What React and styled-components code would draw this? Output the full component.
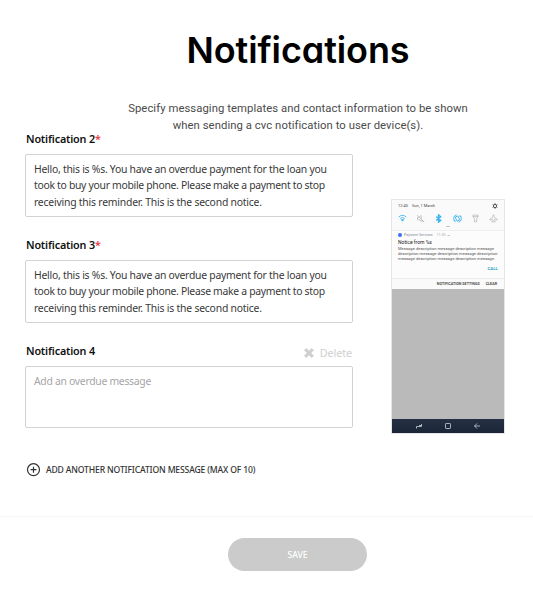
import React from "react";
import styled, { createGlobalStyle } from "styled-components";

const GlobalStyle = createGlobalStyle`
  *, *::before, *::after { box-sizing: border-box; }
  body { margin: 0; background: #fff; overflow: hidden; }
`;

const Page = styled.div`
  width: 533px;
  height: 596px;
  display: flex;
  flex-direction: column;
  overflow: hidden;
  background: #fff;
  font-family: "Noto Sans", sans-serif;
`;

const Header = styled.header`
  height: 133px;
  padding: 28px 0 0 63px;
  display: flex;
  flex-direction: column;
  align-items: center;
`;

const Title = styled.h1`
  margin: 0;
  font: 600 36px/44px Inter, sans-serif;
  font-feature-settings: "cv11";
  letter-spacing: -0.1px;
  color: #000;
`;

const Subtitle = styled.p`
  margin: 29px 0 0;
  font: 400 11.3px/16.5px Roboto, sans-serif;
  text-align: center;
  color: #4a4a4a;
`;

const Line = styled.span`
  display: block;
  white-space: nowrap;
  letter-spacing: ${(p) => p.$track || 0}px;
`;

const Content = styled.main`
  height: 383px;
  padding-left: 25px;
  display: flex;
  gap: 38px;
`;

const Form = styled.div`
  width: 328px;
`;

const Field = styled.section`
  height: 106px;
`;

const FieldHead = styled.div`
  height: 21px;
  padding: 0 1px;
  display: flex;
  justify-content: space-between;
`;

const Label = styled.label`
  margin-top: -2px;
  font-size: 10.8px;
  line-height: 16px;
  font-weight: 600;
  letter-spacing: -0.18px;
  color: #111;
`;

const Required = styled.span`
  color: #f0383c;
`;

const DeleteButton = styled.button`
  height: 16px;
  border: 0;
  padding: 0;
  background: none;
  display: flex;
  align-items: center;
  gap: 6px;
  font: 400 10.8px/16px "Noto Sans", sans-serif;
  letter-spacing: -0.1px;
  color: #cfcfcf;
`;

const MessageBox = styled.div`
  height: ${(p) => (p.$placeholder ? 62 : 63)}px;
  padding: 6px 8px;
  border: 1px solid #d2d2d2;
  border-radius: 2px;
  font-size: 10.4px;
  line-height: 16.4px;
  color: ${(p) => (p.$placeholder ? "#a6a6a6" : "#383838")};
`;

const AddButton = styled.button`
  margin-top: 11px;
  height: 16px;
  border: 0;
  padding: 0 0 0 1px;
  background: none;
  display: flex;
  align-items: center;
  gap: 5px;
  font: 500 8.6px/16px "Noto Sans", sans-serif;
  letter-spacing: -0.155px;
  white-space: nowrap;
  color: #333;
`;

const Phone = styled.aside`
  width: 114px;
  height: 235px;
  margin-top: 66px;
  border: 1px solid #e6e6e6;
  display: flex;
  flex-direction: column;
  background: #bababa;
  font-family: Roboto, sans-serif;
`;

const QuickPanel = styled.div`
  height: 31px;
  padding: 3px 6px 0;
  background: #fafafa;
  border-bottom: 1px solid #f0f0f0;
`;

const StatusRow = styled.div`
  height: 6px;
  display: flex;
  align-items: center;
  justify-content: space-between;
  font-size: 4px;
  line-height: 6px;
  color: #444;
`;

const Clock = styled.div`
  display: flex;
  gap: 4px;
  white-space: nowrap;
`;

const Toggles = styled.div`
  height: 12px;
  margin-top: 3px;
  display: flex;
  align-items: center;
  justify-content: space-between;
`;

const Handle = styled.div`
  width: 4px;
  height: 1px;
  margin: 2px auto 0;
  background: #c4c4c4;
`;

const Notice = styled.div`
  height: 48px;
  padding: 1px 6px 0;
  background: #fcfcfc;
  border-bottom: 1px solid #ececec;
`;

const NoticeSource = styled.div`
  height: 6px;
  display: flex;
  align-items: center;
  gap: 2px;
  font-size: 3.6px;
  line-height: 6px;
  color: #7e8c98;
  white-space: nowrap;
`;

const Dot = styled.span`
  width: 4px;
  height: 4px;
  border-radius: 50%;
  background: #3d6df2;
`;

const Time = styled.span`
  margin-left: 2px;
  color: #aaa;
`;

const NoticeTitle = styled.div`
  font-size: 5px;
  line-height: 8px;
  font-weight: 400;
  color: #222;
`;

const NoticeBody = styled.div`
  margin-top: 1px;
  font-size: 4.15px;
  line-height: 4.8px;
  color: #555;
`;

const Call = styled.div`
  margin-top: 5px;
  font-size: 4.4px;
  line-height: 6px;
  font-weight: 600;
  text-align: right;
  color: #1f9cc5;
`;

const NoticeActions = styled.div`
  height: 10px;
  padding: 0 7px;
  background: #fafafa;
  display: flex;
  align-items: center;
  justify-content: flex-end;
  gap: 6px;
  font-size: 3.7px;
  font-weight: 600;
  color: #444;
  white-space: nowrap;
`;

const Wallpaper = styled.div`
  flex: 1;
  background: #bababa;
`;

const NavBar = styled.div`
  height: 14px;
  padding: 0 23px;
  display: flex;
  align-items: center;
  justify-content: space-between;
  background: linear-gradient(#253044, #1b2537);
`;

const Icon = styled.svg`
  flex: none;
  width: ${(p) => p.$size}px;
  height: ${(p) => p.$size}px;
  fill: none;
  stroke: currentColor;
  stroke-width: ${(p) => p.$weight || 2};
  color: ${(p) => p.$color || "inherit"};
`;

const Footer = styled.footer`
  flex: 1;
  padding: 21px 0 0 62px;
  border-top: 1px solid #f5f5f5;
  display: flex;
  justify-content: center;
  align-items: flex-start;
`;

const SaveButton = styled.button`
  width: 139px;
  height: 33px;
  padding: 1px 0 0;
  border: 0;
  border-radius: 17px;
  background: #cbcbcb;
  color: #fff;
  font: 500 8.6px/32px "Noto Sans", sans-serif;
`;

const overdueMessage = [
  ["Hello, this is %s. You have an overdue payment for the loan you", -0.254],
  ["took to buy your mobile phone. Please make a payment to stop", -0.3],
  ["receiving this reminder. This is the second notice.", -0.212],
];

const fields = [
  { label: "Notification 2", required: true, lines: overdueMessage },
  { label: "Notification 3", required: true, lines: overdueMessage },
  { label: "Notification 4", removable: true, placeholder: true, lines: [["Add an overdue message", -0.29]] },
];

function NotificationField({ label, required, removable, placeholder, lines }) {
  return (
    <Field>
      <FieldHead>
        <Label>
          {label}
          {required && <Required>*</Required>}
        </Label>
        {removable && (
          <DeleteButton>
            <Icon $size={10} $weight={3.2} viewBox="0 0 10 10">
              <path d="M1.2 1.2 8.8 8.8M8.8 1.2 1.2 8.8" />
            </Icon>
            Delete
          </DeleteButton>
        )}
      </FieldHead>
      <MessageBox $placeholder={placeholder}>
        {lines.map(([text, track]) => (
          <Line key={text} $track={track}>{text}</Line>
        ))}
      </MessageBox>
    </Field>
  );
}

const toggles = [
  { name: "wifi", on: true, art: <><path d="M2 8a15 15 0 0 1 20 0M6 12a9 9 0 0 1 12 0" /><path d="M9 15h6l-3 4z" fill="currentColor" /></> },
  { name: "mute", art: <><path d="M4 9h4l6-5v16l-6-5H4zM3 3l18 18M18 16v4h4" /></> },
  { name: "bluetooth", on: true, art: <path d="m6 7 12 10-6 5V2l6 5L6 17" strokeWidth="3.5" /> },
  { name: "rotate", on: true, art: <><rect x="8" y="6" width="8" height="12" rx="1" transform="rotate(-30 12 12)" /><path d="M9 2a10 10 0 0 0-4 17M15 22a10 10 0 0 0 4-17M2 16l3 4 3-3M22 8l-3-4-3 3" /></> },
  { name: "torch", art: <path d="M5 3h14v4l-4 5v9H9v-9L5 7zM5 7h14" /> },
  { name: "airplane", art: <path d="M12 2c2 0 2 3 2 7l8 5v2l-8-1v3l3 3H7l3-3v-3l-8 1v-2l8-5c0-4 0-7 2-7z" /> },
];

function PhonePreview() {
  return (
    <Phone>
      <QuickPanel>
        <StatusRow>
          <Clock>
            <span>12:45</span>
            <span>Sun, 1 March</span>
          </Clock>
          <Icon $size={6} $weight={4} $color="#555" viewBox="0 0 24 24">
            <circle cx="12" cy="12" r="6.5" />
            <path d="M12 1v5M12 18v5M2.5 6.5l4 2.5M17.5 15l4 2.5M2.5 17.5l4-2.5M17.5 9l4-2.5" />
          </Icon>
        </StatusRow>
        <Toggles>
          {toggles.map(({ name, on, art }) => (
            <Icon key={name} $size={9} $weight={on ? 2.4 : 2} $color={on ? "#3fb6ee" : "#b8b8b8"} viewBox="0 0 24 24">
              {art}
            </Icon>
          ))}
        </Toggles>
        <Handle />
      </QuickPanel>
      <Notice>
        <NoticeSource>
          <Dot />
          <span>Payment Services</span>
          <Time>11:35</Time>
          <Icon $size={3} $weight={1} $color="#777" viewBox="0 0 6 6">
            <path d="m1 4 2-2 2 2" />
          </Icon>
        </NoticeSource>
        <NoticeTitle>Notice from %s</NoticeTitle>
        <NoticeBody>
          <Line>Message description message description message</Line>
          <Line>description message description message description</Line>
          <Line>message description message description message.</Line>
        </NoticeBody>
        <Call>CALL</Call>
      </Notice>
      <NoticeActions>
        <span>NOTIFICATION SETTINGS</span>
        <span>CLEAR</span>
      </NoticeActions>
      <Wallpaper />
      <NavBar>
        <Icon $size={8} $weight={0.9} $color="#b9bec8" viewBox="0 0 8 8">
          <path d="M1.5 6.5V4.5H6.5V2M4 3.5h3M1 5.5h1" />
        </Icon>
        <Icon $size={8} $weight={0.9} $color="#b9bec8" viewBox="0 0 8 8">
          <rect x="1.5" y="1.5" width="5" height="5" rx="0.6" />
        </Icon>
        <Icon $size={8} $weight={0.9} $color="#b9bec8" viewBox="0 0 8 8">
          <path d="M7 4H1.5M4 1.5 1.5 4 4 6.5" />
        </Icon>
      </NavBar>
    </Phone>
  );
}

export default function App() {
  return (
    <Page>
      <GlobalStyle />
      <Header>
        <Title>Notifications</Title>
        <Subtitle>
          <Line $track={0.06}>Specify messaging templates and contact information to be shown</Line>
          <Line $track={0.06}>when sending a cvc notification to user device(s).</Line>
        </Subtitle>
      </Header>
      <Content>
        <Form>
          {fields.map((field) => (
            <NotificationField key={field.label} {...field} />
          ))}
          <AddButton>
            <Icon $size={15} $weight={1.2} viewBox="0 0 15 15">
              <circle cx="7.5" cy="6.7" r="6" />
              <path d="M7.5 3.7v6M4.5 6.7h6" />
            </Icon>
            ADD ANOTHER NOTIFICATION MESSAGE (MAX OF 10)
          </AddButton>
        </Form>
        <PhonePreview />
      </Content>
      <Footer>
        <SaveButton>SAVE</SaveButton>
      </Footer>
    </Page>
  );
}
